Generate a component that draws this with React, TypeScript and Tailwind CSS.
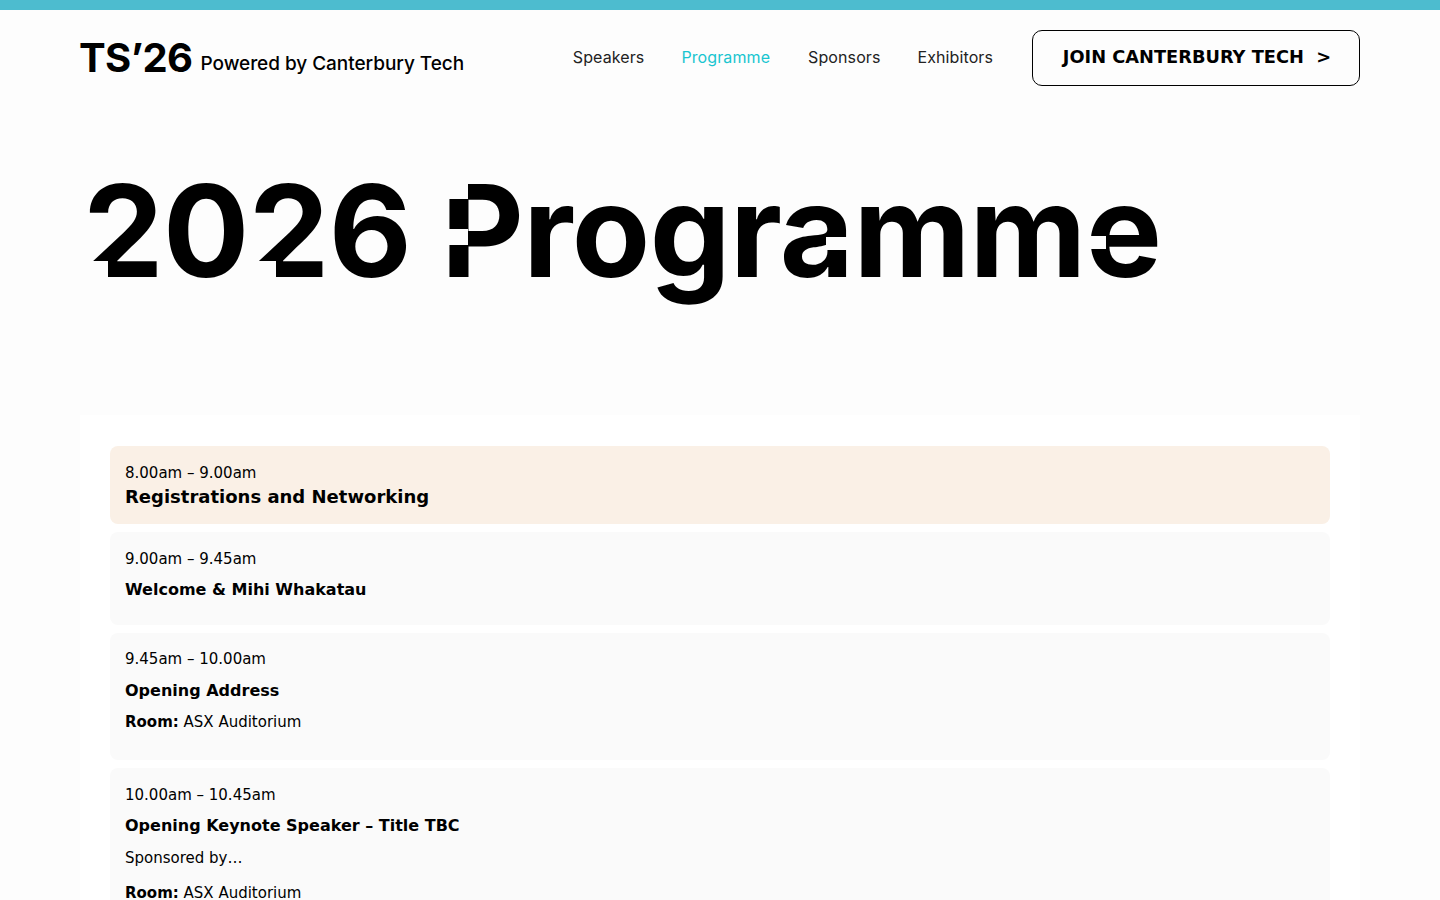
function Cut({ className }: { className: string }) {
  return <span aria-hidden="true" className={`absolute bg-[#fdfdfd] ${className}`} />;
}

export default function App() {
  const rowText = "text-[15px] leading-[24px] text-black";
  const title = "text-[16px] leading-[24px] font-bold";
  return (
    <div className="h-[900px] overflow-hidden bg-[#fdfdfd] font-['DejaVu_Sans',sans-serif] text-black">
      <div className="h-[10px] bg-[#4dbccf]" />
      <header className="flex h-[96px] items-center justify-between px-[80px]">
        <div className="-ml-[1px] flex items-center font-['Inter',sans-serif] text-black">
          <span className="text-[40px] leading-[48px] font-bold tracking-[-0.6px]">TS’26</span>
          <span className="ml-[8px] mt-[11px] text-[19px] leading-[24px] font-medium tracking-[-0.04px]">Powered by Canterbury Tech</span>
        </div>
        <nav className="flex items-center text-[16px] text-[#222222]">
          <a className="mr-[37px] mb-[2px] font-['Inter',sans-serif] tracking-[0.1px]">Speakers</a>
          <a className="mr-[38px] mb-[2px] font-['Inter',sans-serif] tracking-[0.1px] text-[#19c5d0]">Programme</a>
          <a className="mr-[37px] mb-[2px] font-['Inter',sans-serif] tracking-[0.1px]">Sponsors</a>
          <a className="mr-[39px] mb-[2px] font-['Inter',sans-serif] tracking-[0.1px]">Exhibitors</a>
          <a className="flex h-[56px] w-[328px] items-center justify-center rounded-[10px] border border-black pb-[2px] pl-[2px] text-[17.8px] font-bold text-black">JOIN CANTERBURY TECH&nbsp;&nbsp;&gt;</a>
        </nav>
      </header>
      <h1 className="relative mt-[50px] h-[259px] pl-[83px] font-['Inter',sans-serif] text-[128px] leading-[150px] font-[650] tracking-[-0.6px] text-black">
        2026 Programme
        <Cut className="left-[84px] top-[105px] h-[18px] w-[24px]" />
        <Cut className="left-[250px] top-[105px] h-[18px] w-[26px]" />
        <Cut className="left-[444px] top-[26px] h-[17px] w-[24px]" />
        <Cut className="left-[444px] top-[73px] h-[16px] w-[24px]" />
        <Cut className="left-[826px] top-[81px] h-[13px] w-[24px]" />
        <Cut className="left-[1086px] top-[80px] h-[13px] w-[20px]" />
      </h1>
      <main className="mx-[80px] flex flex-col bg-white px-[30px] pt-[31px]">
        <section className="h-[77.8px] rounded-[8px] bg-[#faf0e6] px-[15px] pt-[15px]">
          <p className={rowText}>8.00am – 9.00am</p>
          <p className="-mt-[1px] text-[18px] leading-[26px] font-bold">Registrations and Networking</p>
        </section>
        <section className="mt-[8px] h-[92.8px] rounded-[8px] bg-[#fafafa] px-[15px] pt-[15px]">
          <p className={rowText}>9.00am – 9.45am</p>
          <p className={`mt-[7px] ${title}`}>Welcome &amp; Mihi Whakatau</p>
        </section>
        <section className="mt-[8px] h-[127.6px] rounded-[8px] bg-[#fafafa] px-[15px] pt-[14px]">
          <p className={rowText}>9.45am – 10.00am</p>
          <p className={`mt-[8.5px] ${title}`}>Opening Address</p>
          <p className={`mt-[6.5px] ${rowText}`}><b>Room:</b> ASX Auditorium</p>
        </section>
        <section className="mt-[8px] h-[200px] rounded-[8px] bg-[#fafafa] px-[15px] pt-[15px]">
          <p className={rowText}>10.00am – 10.45am</p>
          <p className={`mt-[7px] ${title}`}>Opening Keynote Speaker – Title TBC</p>
          <p className={`mt-[8px] ${rowText}`}>Sponsored by…</p>
          <p className={`mt-[11px] ${rowText}`}><b>Room:</b> ASX Auditorium</p>
        </section>
      </main>
    </div>
  );
}
